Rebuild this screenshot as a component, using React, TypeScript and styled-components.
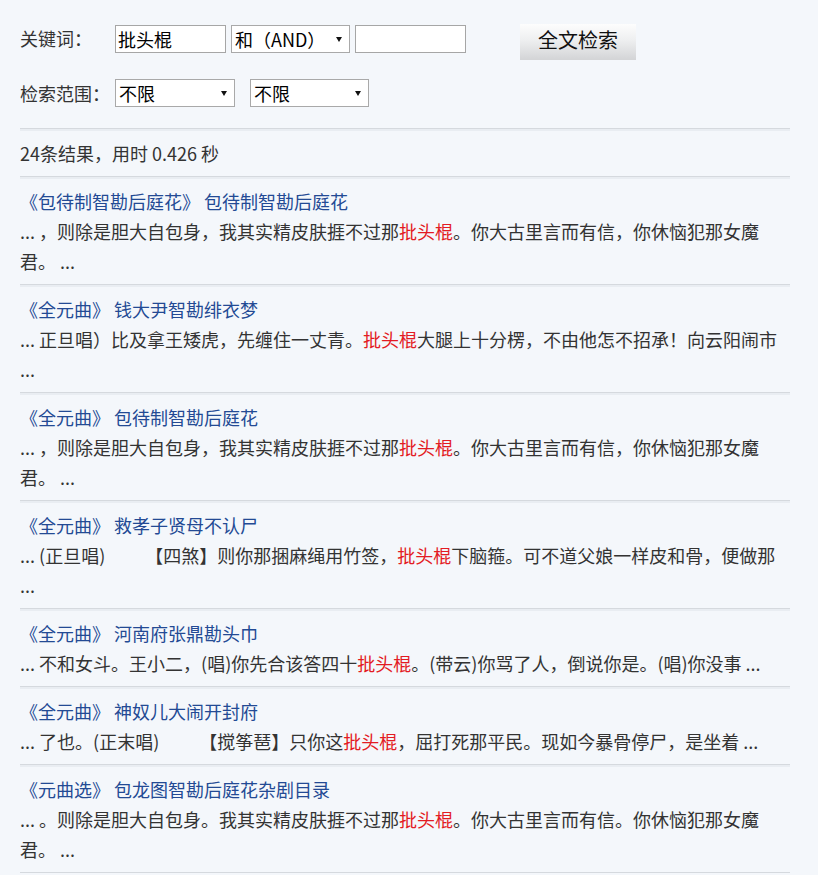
import React from "react";
import styled, { createGlobalStyle } from "styled-components";

const GlobalStyle = createGlobalStyle`
  html, body {
    margin: 0;
    padding: 0;
    background: #f4f7fb;
  }
  body {
    font-family: "Noto Sans CJK SC", "Liberation Sans", sans-serif;
    color: #333;
  }
`;

const Page = styled.div`
  padding: 0 28px 0 20px;
  font-size: 18px;
`;

const SearchForm = styled.form`
  padding: 24px 0 21px;
  border-bottom: 1px solid #d5d9de;
  box-shadow: 0 2px 0 #e9edf2;
`;

const FormRow = styled.div<{ $gap?: number }>`
  display: flex;
  align-items: flex-start;
  height: ${(p) => (p.$gap ? "28px" : "36px")};
  margin-top: ${(p) => (p.$gap ? `${p.$gap}px` : "0")};
`;

const Label = styled.label`
  width: 95px;
  flex: none;
  line-height: 28px;
  margin-top: 0;
  color: #333;
`;

const TextInput = styled.input`
  box-sizing: border-box;
  width: 111px;
  height: 28px;
  margin: 1px 5px 0 0;
  padding: 0 2px;
  border: 1px solid #a6a6a6;
  background: #fff;
  font: inherit;
  font-size: 18px;
  color: #000;
  outline: none;
`;

const SelectWrap = styled.span<{ $width: number; $gapRight: number; $top?: number }>`
  position: relative;
  display: inline-block;
  flex: none;
  width: ${(p) => p.$width}px;
  height: 28px;
  margin-top: ${(p) => p.$top ?? 0}px;
  margin-right: ${(p) => p.$gapRight}px;

  &::after {
    content: "";
    position: absolute;
    right: 8px;
    top: 12px;
    border-left: 3px solid transparent;
    border-right: 3px solid transparent;
    border-top: 5px solid #111;
    pointer-events: none;
  }
`;

const Select = styled.select`
  appearance: none;
  -webkit-appearance: none;
  box-sizing: border-box;
  width: 100%;
  height: 28px;
  padding: 0 16px 0 3px;
  border: 1px solid #a9a9a9;
  border-radius: 0;
  background: #fff;
  font: inherit;
  font-size: 18px;
  color: #000;
  outline: none;
`;

const SearchButton = styled.button`
  width: 116px;
  height: 36px;
  margin-left: 49px;
  border: none;
  padding: 0 0 5px;
  background: linear-gradient(to bottom, #fdfdfd 0%, #eeeff0 45%, #d3d4d6 100%);
  font: inherit;
  font-size: 20px;
  color: #111;
  cursor: pointer;
`;

const Block = styled.div`
  padding: 9px 0 8px;
  line-height: 30px;
  border-bottom: 1px solid #d5d9de;
  box-shadow: 0 2px 0 #e9edf2;
`;

const TitleLine = styled.div`
  color: #234a94;
`;

const Snippet = styled.div`
  color: #333;
  word-break: break-all;
`;

const Hit = styled.span`
  color: #e31b23;
`;

type Result = {
  book: string;
  title: string;
  before: string;
  after: string;
};

const GAP = "\u3000\u3000\u00a0";

const results: Result[] = [
  {
    book: "《包待制智勘后庭花》",
    title: "包待制智勘后庭花",
    before: "... ，则除是胆大自包身，我其实精皮肤捱不过那",
    after: "。你大古里言而有信，你休恼犯那女魔君。 ...",
  },
  {
    book: "《全元曲》",
    title: "钱大尹智勘绯衣梦",
    before: "... 正旦唱）比及拿王矮虎，先缠住一丈青。",
    after: "大腿上十分楞，不由他怎不招承！向云阳闹市 ...",
  },
  {
    book: "《全元曲》",
    title: "包待制智勘后庭花",
    before: "... ，则除是胆大自包身，我其实精皮肤捱不过那",
    after: "。你大古里言而有信，你休恼犯那女魔君。 ...",
  },
  {
    book: "《全元曲》",
    title: "救孝子贤母不认尸",
    before: `... (正旦唱)${GAP}【四煞】则你那捆麻绳用竹签，`,
    after: "下脑箍。可不道父娘一样皮和骨，便做那 ...",
  },
  {
    book: "《全元曲》",
    title: "河南府张鼎勘头巾",
    before: "... 不和女斗。王小二，(唱)你先合该答四十",
    after: "。(带云)你骂了人，倒说你是。(唱)你没事 ...",
  },
  {
    book: "《全元曲》",
    title: "神奴儿大闹开封府",
    before: `... 了也。(正末唱)${GAP}【搅筝琶】只你这`,
    after: "，屈打死那平民。现如今暴骨停尸，是坐着 ...",
  },
  {
    book: "《元曲选》",
    title: "包龙图智勘后庭花杂剧目录",
    before: "... 。则除是胆大自包身。我其实精皮肤捱不过那",
    after: "。你大古里言而有信。你休恼犯那女魔君。 ...",
  },
];

export default function App() {
  return (
    <>
      <GlobalStyle />
      <Page>
        <SearchForm onSubmit={(e) => e.preventDefault()}>
          <FormRow>
            <Label>关键词：</Label>
            <TextInput defaultValue="批头棍" />
            <SelectWrap $width={119} $gapRight={5} $top={1}>
              <Select defaultValue="and">
                <option value="and">和（AND）</option>
                <option value="or">或（OR）</option>
              </Select>
            </SelectWrap>
            <TextInput />
            <SearchButton type="submit">全文检索</SearchButton>
          </FormRow>
          <FormRow $gap={19}>
            <Label>检索范围：</Label>
            <SelectWrap $width={120} $gapRight={15} $top={0}>
              <Select defaultValue="all">
                <option value="all">不限</option>
              </Select>
            </SelectWrap>
            <SelectWrap $width={119} $gapRight={0} $top={0}>
              <Select defaultValue="all">
                <option value="all">不限</option>
              </Select>
            </SelectWrap>
          </FormRow>
        </SearchForm>

        <Block>24条结果，用时 0.426 秒</Block>

        {results.map((r, i) => (
          <Block key={i}>
            <TitleLine>
              {r.book} {r.title}
            </TitleLine>
            <Snippet>
              {r.before}
              <Hit>批头棍</Hit>
              {r.after}
            </Snippet>
          </Block>
        ))}
      </Page>
    </>
  );
}
